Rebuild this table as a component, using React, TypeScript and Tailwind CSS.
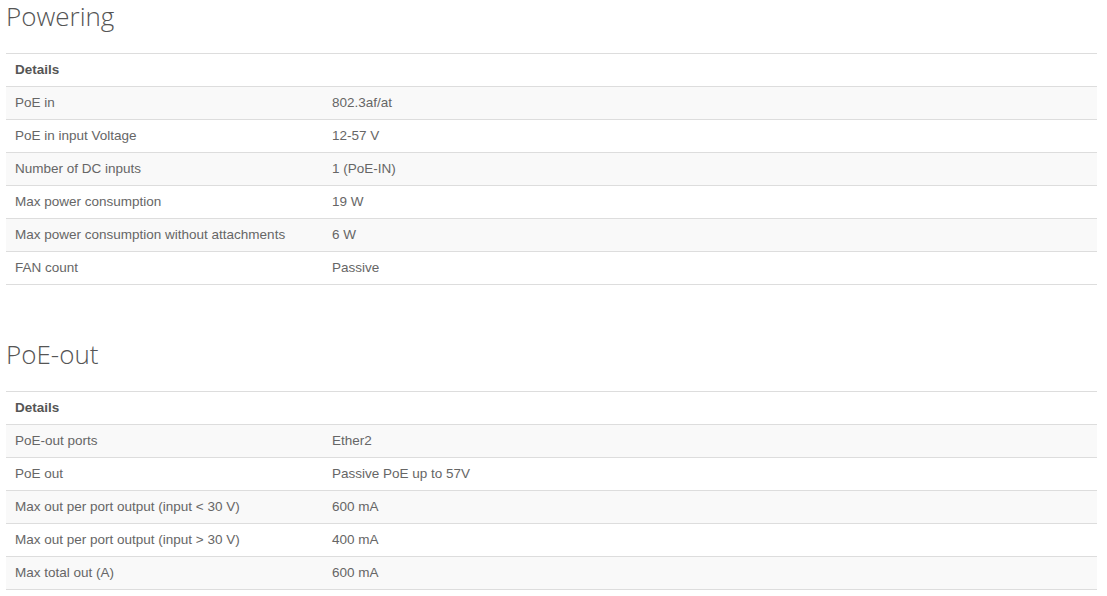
const sections: { title: string; rows: [string, string][] }[] = [
  {
    title: "Powering",
    rows: [
      ["PoE in", "802.3af/at"],
      ["PoE in input Voltage", "12-57 V"],
      ["Number of DC inputs", "1 (PoE-IN)"],
      ["Max power consumption", "19 W"],
      ["Max power consumption without attachments", "6 W"],
      ["FAN count", "Passive"],
    ],
  },
  {
    title: "PoE-out",
    rows: [
      ["PoE-out ports", "Ether2"],
      ["PoE out", "Passive PoE up to 57V"],
      ["Max out per port output (input < 30 V)", "600 mA"],
      ["Max out per port output (input > 30 V)", "400 mA"],
      ["Max total out (A)", "600 mA"],
    ],
  },
];

function SpecTable({ title, rows, first }: { title: string; rows: [string, string][]; first?: boolean }) {
  return (
    <section className={first ? "" : "mt-[53px]"}>
      <h2 className="text-[26px] leading-[32px] text-[#555] font-light mb-[21px]" style={{ fontFamily: '"Open Sans", sans-serif' }}>
        {title}
      </h2>
      <table className="w-full border-collapse text-[13.5px] text-[#666]">
        <thead>
          <tr className="border-t border-[#ddd]">
            <th colSpan={2} className="h-[33px] px-[9px] text-left font-bold text-[#555]">
              Details
            </th>
          </tr>
        </thead>
        <tbody>
          {rows.map(([k, v], i) => (
            <tr key={k} className={`border-t border-b border-[#ddd] ${i % 2 === 0 ? "bg-[#f9f9f9]" : "bg-white"}`}>
              <td className="h-[33px] px-[9px] w-[318px] font-normal">{k}</td>
              <td className="h-[33px] px-[8px]">{v}</td>
            </tr>
          ))}
        </tbody>
      </table>
    </section>
  );
}

export default function App() {
  return (
    <div className="min-h-screen bg-white pl-[6px] pr-[10px]" style={{ fontFamily: '"Liberation Sans", Arial, sans-serif' }}>
      {sections.map((s, i) => (
        <SpecTable key={s.title} title={s.title} rows={s.rows} first={i === 0} />
      ))}
    </div>
  );
}
